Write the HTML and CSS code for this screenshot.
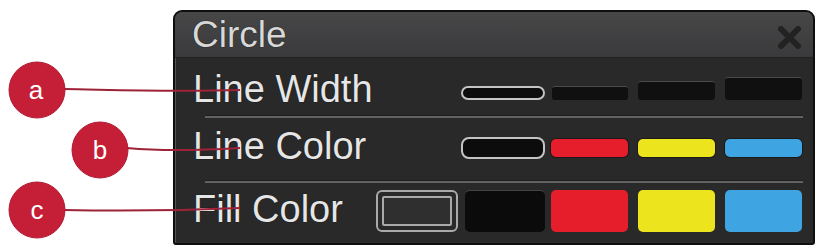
FILE: index.html
```html
<!DOCTYPE html>
<html>
<head>
<meta charset="utf-8">
<link rel="stylesheet" href="styles.css">
</head>
<body>
<div class="stage">
  <div class="panel">
    <div class="titlebar">
      <span class="title">Circle</span>
      <svg class="close" width="25" height="23" viewBox="0 0 25 23"><path d="M4 3 L21 20 M21 3 L4 20" stroke="#222223" stroke-width="6" stroke-linecap="round"/></svg>
    </div>
    <div class="row row-width">
      <span class="label">Line Width</span>
      <div class="swatches sw-width">
        <div class="sw w1 sel"></div>
        <div class="sw w2 dark"></div>
        <div class="sw w3 dark"></div>
        <div class="sw w4 dark"></div>
      </div>
    </div>
    <div class="sep"></div>
    <div class="row row-line">
      <span class="label">Line Color</span>
      <div class="swatches sw-line">
        <div class="sw l0 sel"></div>
        <div class="sw lc red"></div>
        <div class="sw lc yellow"></div>
        <div class="sw lc blue"></div>
      </div>
    </div>
    <div class="sep"></div>
    <div class="row row-fill">
      <span class="label">Fill Color</span>
      <div class="swatches sw-fill">
        <div class="sw f-none"><div class="f-inner"></div></div>
        <div class="sw fc black"></div>
        <div class="sw fc red"></div>
        <div class="sw fc yellow"></div>
        <div class="sw fc blue"></div>
      </div>
    </div>
  </div>
  <svg class="callouts" width="818" height="248" viewBox="0 0 818 248">
    <g fill="none" stroke="#9e2238" stroke-width="2">
      <path d="M64 89 C 120 90, 170 92, 240 90"/>
      <path d="M127 148 C 160 151, 190 151, 240 148"/>
      <path d="M64 210 C 120 211, 170 211, 240 208"/>
    </g>
    <g fill="#c51f38" stroke="#b11a33" stroke-width="1">
      <circle cx="37" cy="90" r="28"/>
      <circle cx="100" cy="150" r="28"/>
      <circle cx="37" cy="210" r="28"/>
    </g>
    <g fill="#ffffff" font-family="Liberation Sans, Arial, sans-serif" font-size="26" text-anchor="middle">
      <text x="36" y="99">a</text>
      <text x="100" y="159">b</text>
      <text x="37" y="219">c</text>
    </g>
  </svg>
</div>
</body>
</html>
```
FILE: styles.css
```css
html, body {
  margin: 0;
  padding: 0;
  background: #ffffff;
}
.stage {
  position: relative;
  width: 818px;
  height: 248px;
  overflow: hidden;
  padding-top: 10px;
  box-sizing: border-box;
}
.panel {
  margin-left: 173px;
  width: 642px;
  height: 235px;
  box-sizing: border-box;
  border: 2px solid #0e0e0e;
  border-radius: 9px 9px 3px 3px;
  background: #29292a;
  display: flex;
  flex-direction: column;
  font-family: "Liberation Sans", Arial, sans-serif;
  overflow: hidden;
  box-shadow: inset 1px 1px 0 #555;
}
.titlebar {
  height: 46px;
  flex: none;
  display: flex;
  align-items: flex-start;
  justify-content: space-between;
  padding: 4px 11px 0 17px;
  background: linear-gradient(#474748, #3a3a3c);
  border-bottom: 1px solid #232323;
  box-sizing: border-box;
}
.title {
  font-size: 37px;
  line-height: 37px;
  color: #d8d8d8;
  text-shadow: 0 0 1px #000;
}
.close {
  margin-top: 10px;
}
.row {
  display: flex;
  align-items: flex-end;
  justify-content: space-between;
  padding: 0 11px 0 18px;
  flex: none;
}
.label {
  font-size: 38px;
  line-height: 37px;
  color: #e6e6e6;
  text-shadow: 0 0 1px #000;
}
.row-width { height: 57px; }
.row-width .label { margin-bottom: 7px; }
.row-width .swatches { margin-bottom: 15px; }
.row-line { height: 62px; }
.row-line .label { margin-bottom: 15px; }
.row-line .swatches { margin-bottom: 21px; }
.row-fill { height: 61px; }
.row-fill .label { margin-bottom: 16px; }
.row-fill .swatches { margin-bottom: 12px; }
.sep {
  height: 2px;
  flex: none;
  margin: 0 10px 0 30px;
  background: #626262;
  border-top: 1px solid #1e1e1e;
}
.swatches {
  display: flex;
  align-items: flex-end;
}
.row-line .swatches { align-items: center; }
.sw {
  box-sizing: border-box;
  flex: none;
}
.sel {
  border: 2px solid #c4c4c4;
  background: #0c0c0c;
  border-radius: 8px;
}
.dark {
  background: #101010;
  border-top: 1px solid #4a4a4a;
  border-radius: 3px;
}
.w1 { width: 84px; height: 14px; }
.w2 { width: 76px; height: 14px; margin-left: 7px; }
.w3 { width: 77px; height: 19px; margin-left: 10px; }
.w4 { width: 77px; height: 23px; margin-left: 10px; }
.l0 { width: 84px; height: 22px; }
.lc { width: 77px; height: 18px; border-radius: 5px; box-shadow: 0 0 0 1px #1a1a1a; }
.lc.red { width: 77px; margin-left: 6px; }
.lc.yellow, .lc.blue { margin-left: 10px; }
.red { background: #e61e2b; }
.yellow { background: #ece41c; }
.blue { background: #3ea4e2; }
.black { background: #0b0b0b; border-top: 1px solid #444; }
.f-none {
  width: 82px;
  height: 42px;
  border: 2px solid #a9a9a9;
  border-radius: 6px;
  padding: 4px;
}
.f-inner {
  width: 100%;
  height: 100%;
  box-sizing: border-box;
  border: 2px solid #a9a9a9;
  border-radius: 2px;
  background: #2f2f30;
}
.fc { height: 42px; border-radius: 5px; }
.fc.black { width: 80px; margin-left: 7px; }
.fc.red { width: 77px; margin-left: 6px; }
.fc.yellow, .fc.blue { width: 77px; margin-left: 10px; }
.callouts {
  position: absolute;
  left: 0;
  top: 0;
  pointer-events: none;
}
```
